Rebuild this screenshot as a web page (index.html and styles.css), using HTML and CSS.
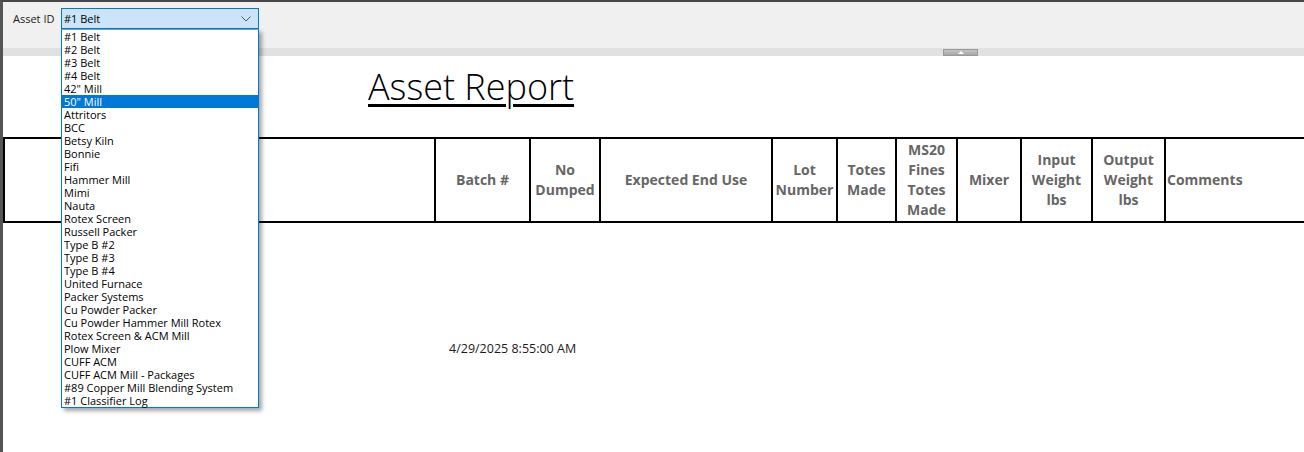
FILE: index.html
```html
<!DOCTYPE html>
<html>
<head>
<meta charset="utf-8">
<title>Asset Report</title>
<link rel="stylesheet" href="styles.css">
</head>
<body>
<div class="frame">
  <div class="toolbar">
    <span class="label">Asset ID</span>
    <div class="combo">
      <div class="combo-box">
        <span class="combo-text">#1 Belt</span>
        <svg class="chevron" width="10" height="6" viewBox="0 0 10 6"><path d="M0.5 0.5 L5 5 L9.5 0.5" fill="none" stroke="#555" stroke-width="1"/></svg>
      </div>
      <ul class="combo-list">
        <li>#1 Belt</li>
        <li>#2 Belt</li>
        <li>#3 Belt</li>
        <li>#4 Belt</li>
        <li>42" Mill</li>
        <li class="selected">50" Mill</li>
        <li>Attritors</li>
        <li>BCC</li>
        <li>Betsy Kiln</li>
        <li>Bonnie</li>
        <li>Fifi</li>
        <li>Hammer Mill</li>
        <li>Mimi</li>
        <li>Nauta</li>
        <li>Rotex Screen</li>
        <li>Russell Packer</li>
        <li>Type B #2</li>
        <li>Type B #3</li>
        <li>Type B #4</li>
        <li>United Furnace</li>
        <li>Packer Systems</li>
        <li>Cu Powder Packer</li>
        <li>Cu Powder Hammer Mill Rotex</li>
        <li>Rotex Screen &amp; ACM Mill</li>
        <li>Plow Mixer</li>
        <li>CUFF ACM</li>
        <li>CUFF ACM Mill - Packages</li>
        <li>#89 Copper Mill Blending System</li>
        <li>#1 Classifier Log</li>
      </ul>
    </div>
  </div>
  <div class="splitter"><div class="splitter-btn"><span class="tri"></span></div></div>
  <div class="report">
    <h1 class="title">Asset Report</h1>
    <table class="grid">
      <colgroup>
        <col class="c-first">
        <col class="c-batch">
        <col class="c-dumped">
        <col class="c-use">
        <col class="c-lot">
        <col class="c-totes">
        <col class="c-ms20">
        <col class="c-mixer">
        <col class="c-input">
        <col class="c-output">
        <col class="c-comments">
      </colgroup>
      <tr>
        <th></th>
        <th>Batch #</th>
        <th>No Dumped</th>
        <th>Expected End Use</th>
        <th>Lot Number</th>
        <th>Totes Made</th>
        <th>MS20 Fines Totes Made</th>
        <th>Mixer</th>
        <th>Input Weight lbs</th>
        <th>Output Weight lbs</th>
        <th class="left">Comments</th>
      </tr>
    </table>
    <div class="date">4/29/2025 8:55:00 AM</div>
  </div>
</div>
</body>
</html>
```
FILE: styles.css
```css
html, body {
  margin: 0;
  padding: 0;
  background: #ffffff;
}
body {
  width: 1304px;
  height: 452px;
  overflow: hidden;
  font-family: "Open Sans", "Noto Sans", sans-serif;
}
.frame {
  box-sizing: border-box;
  width: 1304px;
  height: 452px;
  border-top: 2px solid #474747;
  border-left: 3px solid #555555;
  overflow: hidden;
  display: flex;
  flex-direction: column;
}
.toolbar {
  height: 46px;
  flex: none;
  background: #f0f0f0;
  display: flex;
  align-items: flex-start;
  padding: 6px 0 0 10px;
  box-sizing: border-box;
  position: relative;
  z-index: 5;
}
.label {
  font-size: 11px;
  color: #1a1a1a;
  line-height: 21px;
  width: 48px;
}
.combo {
  position: relative;
  width: 198px;
}
.combo-box {
  box-sizing: border-box;
  height: 21px;
  border: 1px solid #0078d7;
  background: #cce4f7;
  display: flex;
  align-items: center;
  justify-content: space-between;
  padding: 0 7px 0 2px;
}
.combo-text {
  font-size: 11px;
  color: #000;
}
.chevron {
  display: block;
}
.combo-list {
  position: absolute;
  left: 0;
  top: 21px;
  width: 198px;
  box-sizing: border-box;
  margin: 0;
  padding: 0;
  list-style: none;
  background: #fff;
  border: 1px solid #0078d7;
  border-top: 1px solid #7a9fc5;
  box-shadow: 3px 3px 4px rgba(0,0,0,0.35);
}
.combo-list li {
  height: 13px;
  line-height: 13px;
  font-size: 11px;
  padding-left: 2px;
  color: #000;
  white-space: nowrap;
}
.combo-list li.selected {
  background: #0078d7;
  color: #fff;
}
.splitter {
  height: 8px;
  flex: none;
  background: #e1e1e1;
  display: flex;
  padding-left: 940px;
}
.splitter-btn {
  width: 35px;
  height: 7px;
  margin-top: 1px;
  box-sizing: border-box;
  border: 1px solid #9a9a9a;
  background: linear-gradient(#c4c4c4, #a6a6a6);
  display: flex;
  justify-content: center;
  align-items: center;
}
.tri {
  width: 0;
  height: 0;
  border-left: 3px solid transparent;
  border-right: 3px solid transparent;
  border-bottom: 3px solid #ffffff;
}
.report {
  flex: 1;
  background: #fff;
}
.title {
  margin: 7px 0 0 365px;
  font-weight: 300;
  font-size: 36px;
  line-height: 48px;
  color: #000;
  text-decoration: underline;
  text-decoration-thickness: 3px;
  text-underline-offset: 4px;
  display: inline-block;
}
.grid {
  margin-top: 26px;
  border-collapse: collapse;
  table-layout: fixed;
  width: 1440px;
}
.grid th {
  border: 2px solid #000;
  height: 82px;
  padding: 0 1px;
  font-size: 14px;
  line-height: 20px;
  font-weight: 700;
  color: #666666;
  text-align: center;
  vertical-align: middle;
}
.grid th.left {
  text-align: left;
}
.c-first { width: 431px; }
.c-batch { width: 95px; }
.c-dumped { width: 70px; }
.c-use { width: 172px; }
.c-lot { width: 65px; }
.c-totes { width: 59px; }
.c-ms20 { width: 61px; }
.c-mixer { width: 64px; }
.c-input { width: 71px; }
.c-output { width: 73px; }
.c-comments { width: 279px; }
.date {
  margin: 117px 0 0 446px;
  font-size: 12.5px;
  line-height: 17px;
  color: #1a1a1a;
}
```
